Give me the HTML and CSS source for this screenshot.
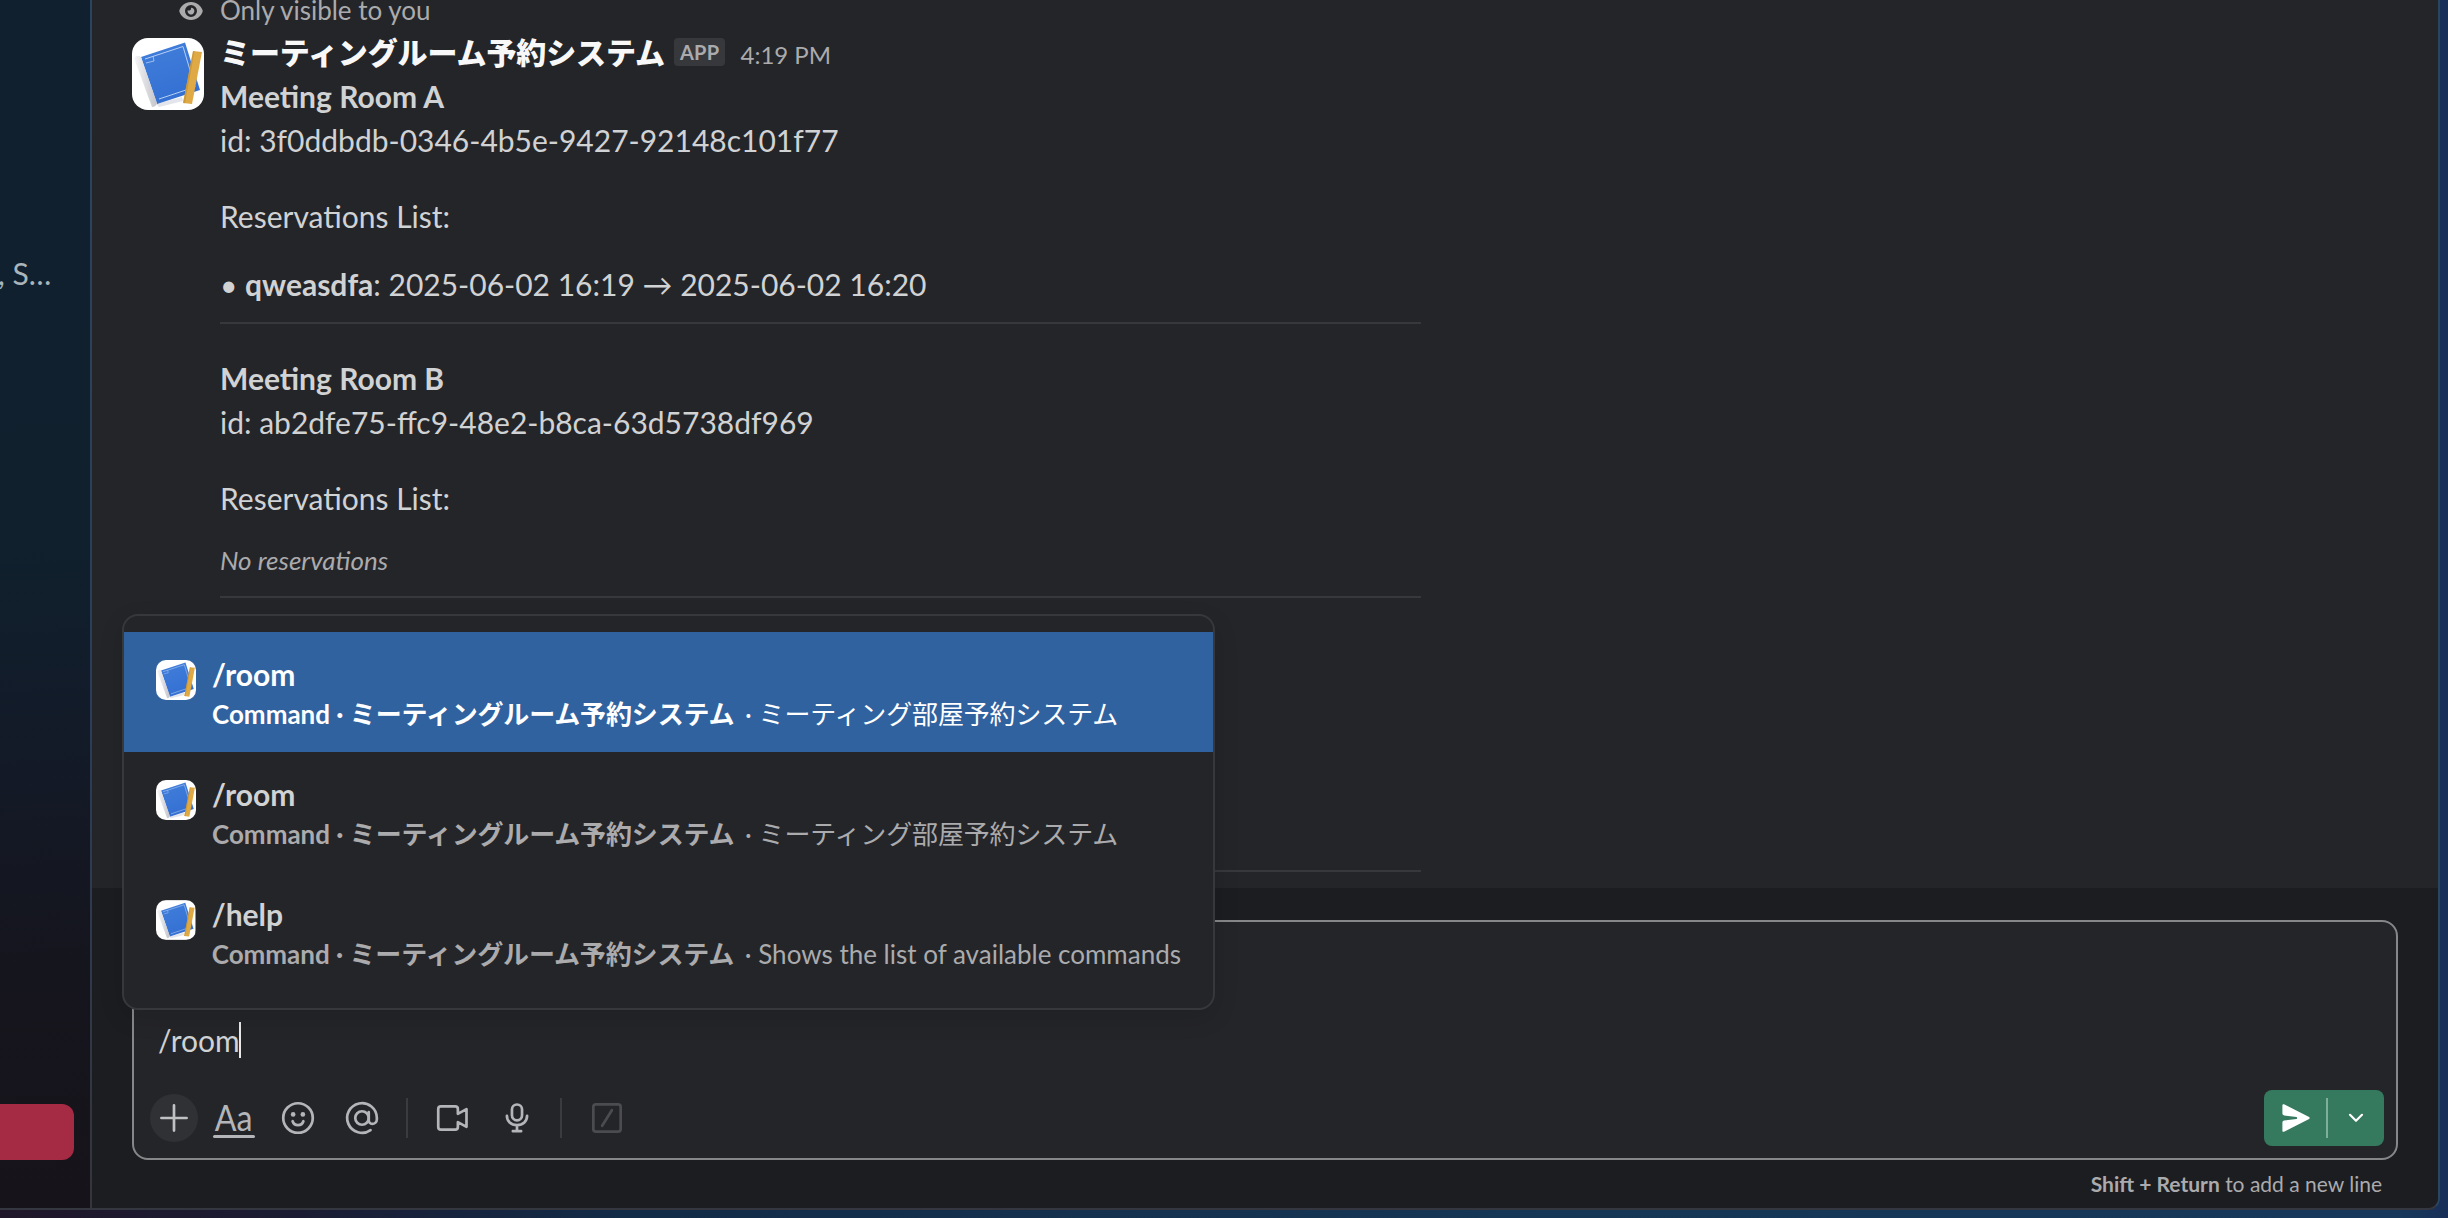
FILE: index.html
```html
<!DOCTYPE html>
<html lang="en">
<head>
<meta charset="utf-8">
<title>Slack</title>
<link rel="stylesheet" href="styles.css">
</head>
<body>
<svg class="defs" width="0" height="0" aria-hidden="true">
  <defs>
    <linearGradient id="blue" x1="0" y1="0" x2="0.3" y2="1"><stop offset="0" stop-color="#427fdb"/><stop offset="1" stop-color="#3470d2"/></linearGradient>
    <linearGradient id="roll" x1="0" y1="0" x2="1" y2="0"><stop offset="0" stop-color="#f6f6f8"/><stop offset="1" stop-color="#c4c5ca"/></linearGradient>
    <symbol id="app-icon" viewBox="0 0 72 72">
      <rect width="72" height="72" fill="#fff"/>
      <path d="M24 66 50 59l1 4-24 6z" fill="#e3e5ea"/>
      <path d="M9 19 53 4.500 68 52 25 66z" fill="url(#blue)"/>
      <path d="M13 21 51 8.500 63 49 27 61" fill="none" stroke="#b5cff5" stroke-width="1"/>
      <path d="M14 25l8-2-1-5" fill="none" stroke="#b5cff5" stroke-width=".8"/>
      <path d="M2 20q3-4 7-1l16 46q-1 4-5 4z" fill="url(#roll)"/>
      <path d="M61 13l9 1-10 52-9-1z" fill="#dfaa45"/>
      <path d="M61 13l1.500.2-9.500 52-2-.2z" fill="#b98427" opacity=".45"/>
    </symbol>
  </defs>
</svg>
<div class="window">
  <aside class="sidebar">
    <div class="peek">, S…</div>
    <div class="alert"></div>
  </aside>
  <main class="pane">
    <section class="messages">
      <div class="visibility">
        <svg class="eye" viewBox="0 0 24 18"><path fill="currentColor" fill-rule="evenodd" d="M12 0C6 0 2 4 .5 8a2.500 2.500 0 0 0 0 2C2 14 6 18 12 18s10-4 11.500-8a2.500 2.500 0 0 0 0-2C22 4 18 0 12 0zm0 3a6 6 0 1 1 0 12 6 6 0 0 1 0-12z"/><path fill="currentColor" d="M12 5.700a3.400 3.400 0 1 1-3.200 2.200 1.800 1.800 0 0 0 2.500.2c.8-.6.900-1.600.7-2.400z"/></svg>
        <span>Only visible to you</span>
      </div>
      <article class="message">
        <svg class="avatar"><use href="#app-icon"/></svg>
        <div class="body">
          <header class="head"><b class="name">ミーティングルーム予約システム</b><span class="badge">APP</span><time>4:19 PM</time></header>
          <div class="room">
            <p><b>Meeting Room A</b><br>id: 3f0ddbdb-0346-4b5e-9427-92148c101f77</p>
            <p class="list">Reservations List:</p>
            <p class="entry">• <b>qweasdfa</b>: 2025-06-02 16:19 → 2025-06-02 16:20</p>
          </div>
          <div class="room">
            <p><b>Meeting Room B</b><br>id: ab2dfe75-ffc9-48e2-b8ca-63d5738df969</p>
            <p class="list">Reservations List:</p>
            <p class="none">No reservations</p>
          </div>
          <div class="room"></div>
        </div>
      </article>
    </section>
    <footer class="composer">
      <div class="box">
        <div class="input">/room<span class="caret"></span></div>
        <div class="tools">
          <span class="plus"><svg class="ico" viewBox="0 0 20 20"><path d="M10 3v14M3 10h14"/></svg></span>
          <span class="tool aa"><span>Aa</span></span>
          <span class="tool"><svg class="ico" viewBox="0 0 20 20"><circle cx="10" cy="10" r="8.200"/><circle cx="7.300" cy="8" r="1.300" class="solid"/><circle cx="12.700" cy="8" r="1.300" class="solid"/><path d="M7 11.800c.5 1.500 1.600 2.200 3 2.200s2.500-.7 3-2.200"/></svg></span>
          <span class="tool"><svg class="ico" viewBox="0 0 20 20"><circle cx="10" cy="10" r="3.750"/><path d="M13.750 6.750v4.605a1.895 1.895 0 0 0 1.895 1.895 2.605 2.605 0 0 0 2.605-2.605V10a8.250 8.250 0 1 0-3.500 6.740"/></svg></span>
          <i class="sep"></i>
          <span class="tool"><svg class="ico" viewBox="0 0 20 20"><path d="M3.300 3.500h7.900c.9 0 1.500.6 1.500 1.500v2.700l4.800-2.600v9.800l-4.800-2.600V15c0 .9-.6 1.500-1.500 1.500H3.300c-.9 0-1.500-.6-1.500-1.500V5c0-.9.600-1.500 1.500-1.500z"/></svg></span>
          <span class="tool"><svg class="ico" viewBox="0 0 20 20"><rect x="7.200" y="2.500" width="5.600" height="8.800" rx="2.800"/><path d="M4.400 8.800c0 3 2.200 5.200 5.600 5.200s5.600-2.200 5.600-5.200M10 14v3.300M7.700 17.300h4.600"/></svg></span>
          <i class="sep"></i>
          <span class="tool dim"><svg class="ico" viewBox="0 0 20 20"><rect x="2.400" y="2.400" width="15.200" height="15.200" rx="1.500"/><path d="M12.700 5.700l-5.400 8.600"/></svg></span>
          <span class="send">
            <svg class="plane" viewBox="0 0 20 20"><path d="M1.500 2.100c0-.6.500-.9 1-.7l15.700 8a.7.7 0 0 1 0 1.200l-15.700 8c-.5.200-1-.1-1-.7v-5c0-.7.400-1.200 1.100-1.300l7.700-.9c.6-.1.600-1.300 0-1.400l-7.700-.9C1.900 8.300 1.500 7.800 1.500 7.100z"/></svg>
            <i class="split"></i>
            <svg class="chev" viewBox="0 0 16 10"><path d="M2 1.800l6 6 6-6"/></svg>
          </span>
        </div>
      </div>
      <div class="hint"><b>Shift + Return</b> to add a new line</div>
    </footer>
    <div class="menu">
      <div class="item active"><svg class="thumb"><use href="#app-icon"/></svg><div><b class="cmd">/room</b><div class="desc"><b>Command · <span class="app">ミーティングルーム予約システム</span></b> <span class="dot">·</span> <span class="app">ミーティング部屋予約システム</span></div></div></div>
      <div class="item"><svg class="thumb"><use href="#app-icon"/></svg><div><b class="cmd">/room</b><div class="desc"><b>Command · <span class="app">ミーティングルーム予約システム</span></b> <span class="dot">·</span> <span class="app">ミーティング部屋予約システム</span></div></div></div>
      <div class="item"><svg class="thumb"><use href="#app-icon"/></svg><div><b class="cmd">/help</b><div class="desc"><b>Command · <span class="app">ミーティングルーム予約システム</span></b> <span class="dot">·</span> Shows the list of available commands</div></div></div>
    </div>
  </main>
</div>
</body>
</html>
```
FILE: styles.css
```css
* { box-sizing: border-box; }
body {
  margin: 0;
  width: 2448px;
  height: 1218px;
  overflow: hidden;
  font: 30px/44px Lato, "Noto Sans CJK JP", sans-serif;
  color: #d1d2d3;
  background: linear-gradient(90deg, #20172a 0, #1b1c33 300px, #122b47 620px, #163655 1500px, #17385a 2400px, #182f58 2448px);
}
p { margin: 0; }
.defs { position: absolute; }
.window {
  display: flex;
  width: 2440px;
  height: 1210px;
  border-right: 2px solid #2a4560;
  border-bottom: 2px solid #353740;
  border-bottom-right-radius: 12px;
  overflow: hidden;
}
.sidebar {
  width: 92px;
  border-right: 2px solid #34373f;
  border-image: linear-gradient(#2c455f, #2b3d59 60%, #35353c) 1;
  border-width: 0 2px 0 0;
  background: linear-gradient(176deg, #11202f 0, #10202d 45%, #131a28 62%, #15151d 80%, #17131a 100%);
  display: flex;
  flex-direction: column;
  justify-content: space-between;
  padding: 251px 0 48px;
}
.peek { margin-left: -2px; color: #a9b5bb; white-space: nowrap; }
.alert { width: 74px; height: 56px; border-radius: 0 12px 12px 0; background: #a52a44; }
.pane { position: relative; flex: 1; display: flex; flex-direction: column; background: #242529; }
.messages { height: 888px; overflow: hidden; padding-left: 40px; }
.visibility { display: flex; align-items: center; height: 36px; margin-top: -8px; padding-left: 47px; gap: 17px; font-size: 26px; line-height: 36px; color: #ababad; }
.eye { width: 24px; height: 18px; margin-top: 1px; }
.message { display: flex; gap: 16px; padding-top: 2px; }
.avatar { width: 72px; height: 72px; margin-top: 8px; border-radius: 16px; }
.head { display: flex; align-items: center; height: 44px; color: #f8f8f8; }
.name { font-weight: 900; letter-spacing: -0.1px; }
.badge { margin: 0 15px 0 9px; height: 28px; padding: 0 6px; border-radius: 4px; background: #37383c; color: #ababad; font-size: 20px; line-height: 28px; font-weight: 700; letter-spacing: .3px; }
.head time { font-size: 24px; color: #ababad; padding-top: 5px; }
.room { width: 1201px; height: 274px; border-bottom: 2px solid #37383c; padding-top: 32px; }
.room:first-of-type { height: 250px; padding-top: 0; }
.list { margin-top: 32px; }
.entry { margin-top: 24px; }
.none { margin-top: 22px; font-size: 26px; line-height: 36px; font-style: italic; color: #ababad; }
.composer { flex: 1; background: #1c1d21; padding: 32px 40px 0; }
.box { height: 240px; border: 2px solid #868789; border-radius: 16px; background: #242529; display: flex; flex-direction: column; justify-content: flex-end; padding: 0 12px 12px; }
.input { display: flex; align-items: center; height: 44px; margin-bottom: 28px; padding-left: 12px; }
.caret { width: 2px; height: 36px; margin-left: -1px; background: #e8e8e8; }
.tools { display: flex; align-items: center; height: 56px; }
.plus { width: 48px; height: 48px; margin: 0 4px; border-radius: 50%; background: #303135; display: grid; place-items: center; color: #c0c1c3; }
.tool { width: 56px; margin: 0 4px; display: grid; place-items: center; color: #b4b5b8; }
.ico { width: 36px; height: 36px; fill: none; stroke: currentColor; stroke-width: 1.500; stroke-linecap: round; stroke-linejoin: round; }
.ico .solid { fill: currentColor; stroke: none; }
.aa span { font-size: 37px; line-height: 36px; transform: scaleX(.87); }
.aa::after { content: ""; width: 42px; height: 3px; border-radius: 2px; background: currentColor; }
.sep { width: 2px; height: 40px; background: #3a3b3f; margin: 0 13px 0 12px; }
.sep ~ .sep { margin-left: 11px; }
.dim { color: #4b4c50; }
.send { margin-left: auto; width: 120px; height: 56px; border-radius: 8px; background: #357a5e; display: flex; align-items: center; padding-left: 16px; }
.plane { width: 32px; height: 32px; fill: #fff; }
.split { width: 2px; height: 40px; margin: 0 20px 0 14px; background: #7fae9b; }
.chev { width: 16px; height: 10px; fill: none; stroke: #fff; stroke-width: 2.200; stroke-linecap: round; stroke-linejoin: round; }
.hint { text-align: right; padding: 6px 16px 0 0; font-size: 21px; line-height: 36px; color: #ababad; }
.menu { position: absolute; left: 30px; top: 614px; width: 1093px; height: 396px; padding: 16px 0; border: 2px solid #37383c; border-radius: 16px; background: #242529; box-shadow: 0 8px 24px rgba(0, 0, 0, .12); }
.item { display: flex; gap: 16px; height: 120px; padding: 22px 32px; color: #ababad; }
.thumb { width: 40px; height: 40px; margin-top: 6px; border-radius: 10px; }
.cmd { display: block; color: #d1d2d3; line-height: 40px; margin-bottom: 2px; }
.desc { font-size: 26px; line-height: 36px; white-space: nowrap; }
.app { letter-spacing: -0.15px; }
.dot { margin-left: 4px; }
.active { background: #30629f; color: #fff; }
.active .cmd { color: #fff; }
```
